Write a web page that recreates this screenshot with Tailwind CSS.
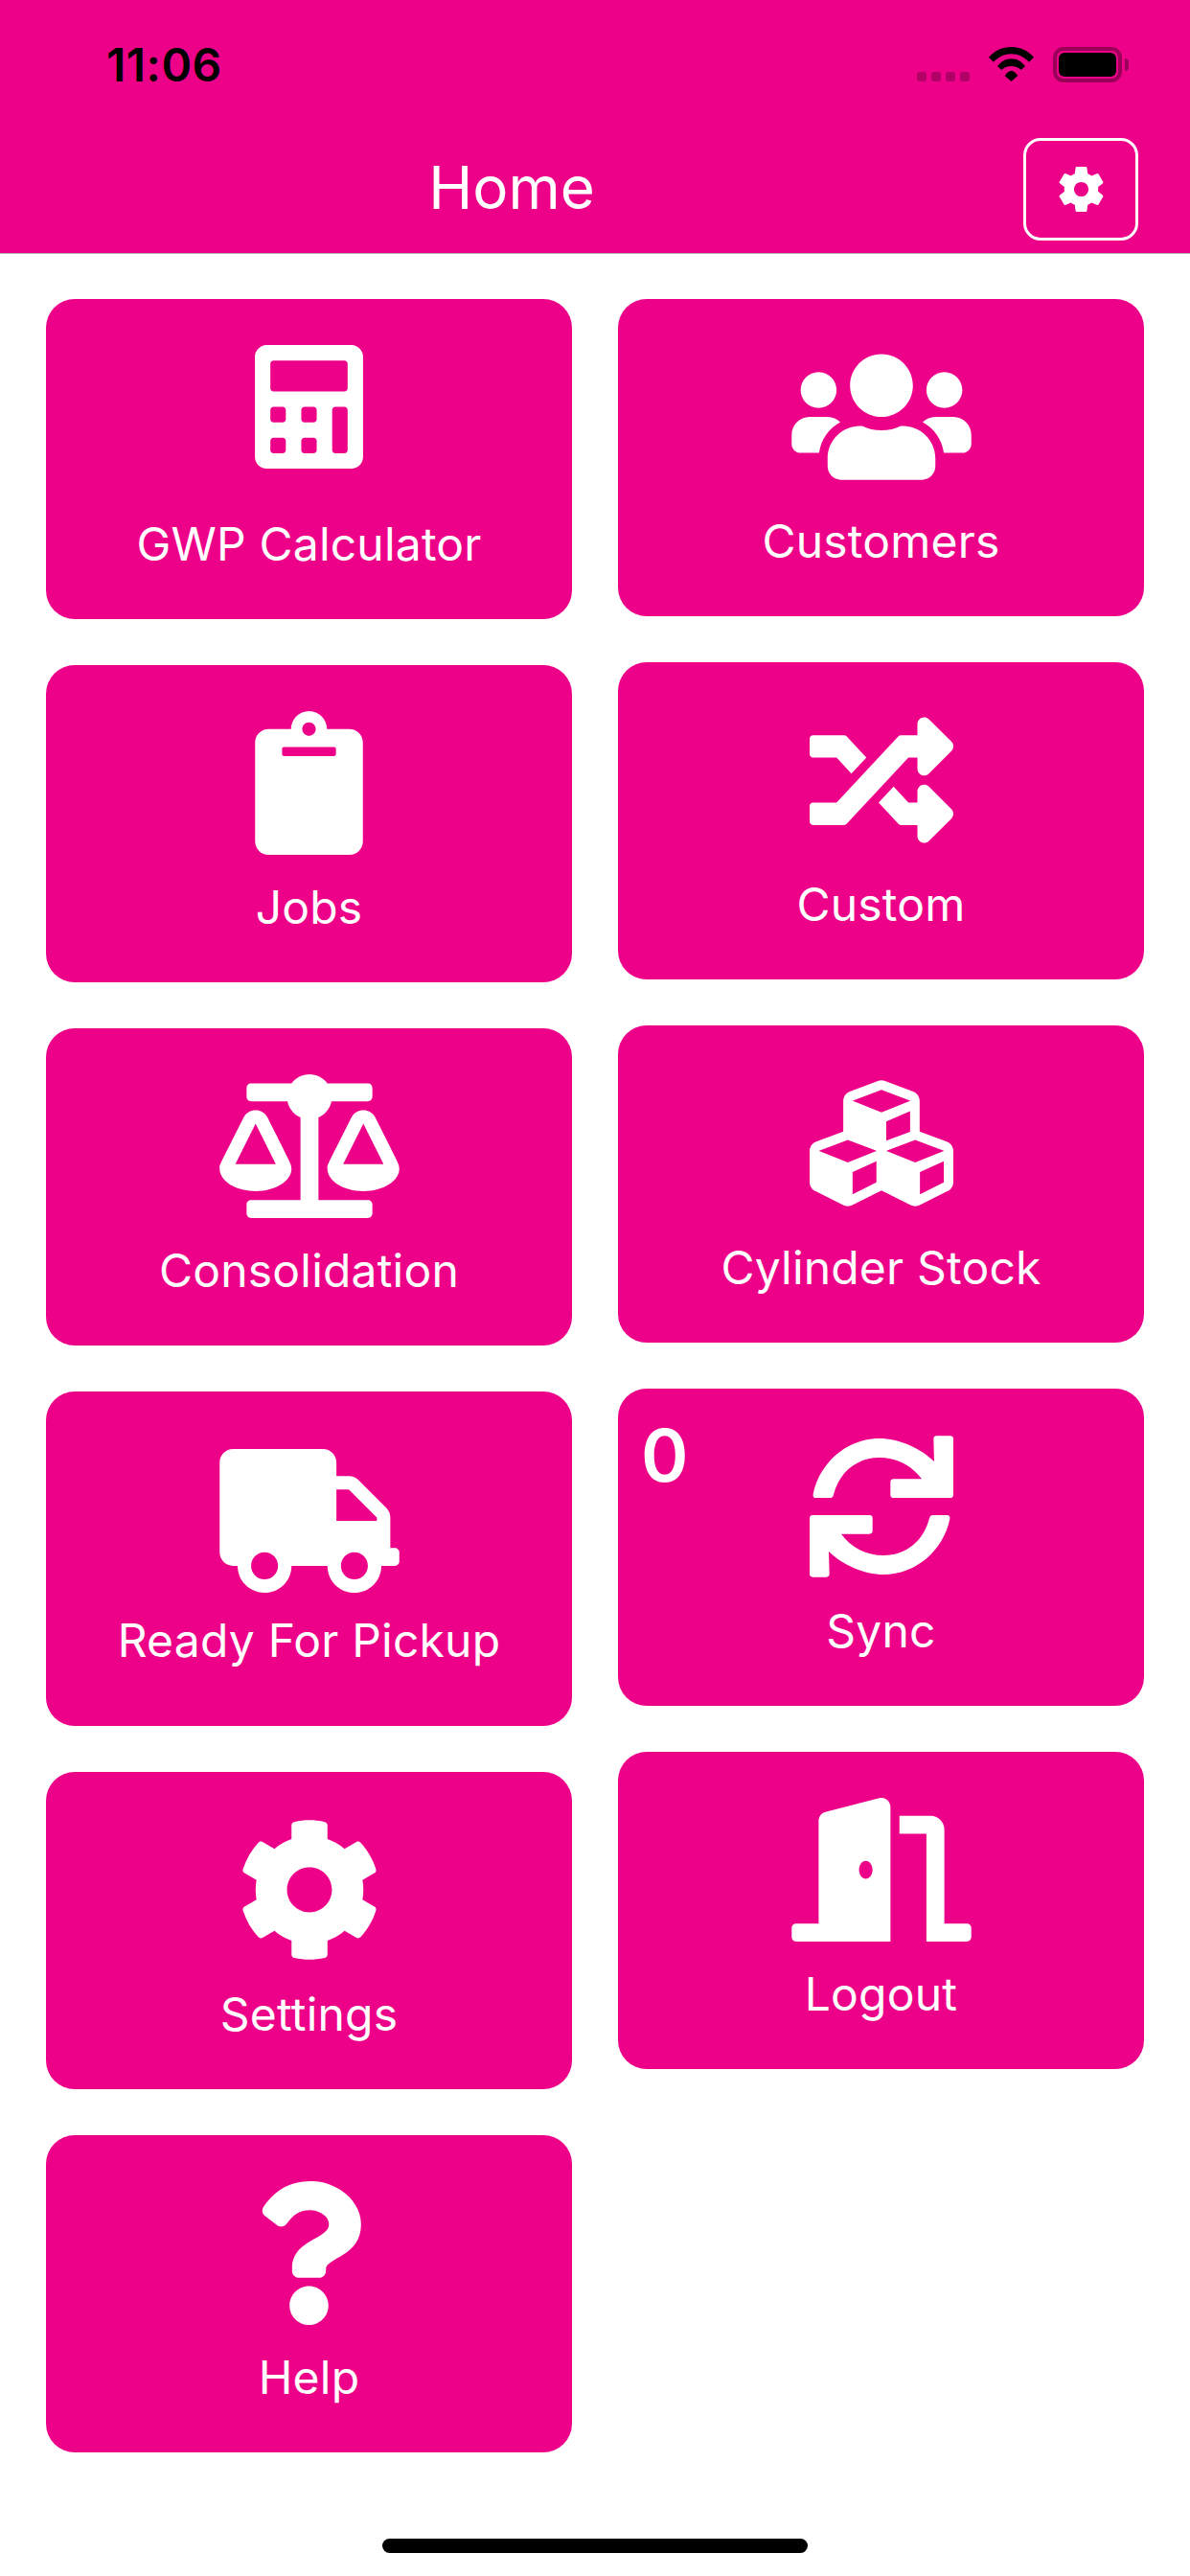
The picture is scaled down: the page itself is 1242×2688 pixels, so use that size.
<!DOCTYPE html>
<html lang="en">
    <head>
        <meta charset="UTF-8" />
        <meta name="viewport" content="width=device-width, initial-scale=1.0" />
        <title>Home</title>
        <script src="https://cdn.jsdelivr.net/npm/@tailwindcss/browser@4"></script>
    </head>
    <body class="bg-white font-['Inter','Liberation_Sans',sans-serif]">
        <div class="relative w-[1242px] h-[2688px] overflow-hidden">
            <!-- Header -->
            <header class="h-[265px] bg-[#ee0189] border-b border-[#b5b5b5]">
                <div class="h-[144px] flex items-start">
                    <div class="ml-[111px] mt-[39px] text-[48px] leading-[58px] font-semibold text-black tracking-[0.5px]">11:06</div>
                    <div class="ml-auto mr-[64px] mt-[49px] flex items-start">
                        <div class="mt-[26px] flex gap-[5px]">
                            <div class="w-[10px] h-[10px] rounded-[3px] bg-black/25"></div>
                            <div class="w-[10px] h-[10px] rounded-[3px] bg-black/25"></div>
                            <div class="w-[10px] h-[10px] rounded-[3px] bg-black/25"></div>
                            <div class="w-[10px] h-[10px] rounded-[3px] bg-black/25"></div>
                        </div>
                        <svg class="ml-[20px] w-[47px] h-[36px]" viewBox="0 0 47 36"><path d="M0 10.700C6 4 14.500 0 23.500 0S41 4 47 10.700l-5 5C37 10.500 31 7.300 23.500 7.300S10 10.500 5 15.700z"/><path d="M9 20C13 15 18 12.300 23.500 12.300S34 15 38 20l-4.300 4C31 21.500 27.500 20 23.500 20s-7.500 1.500-10.200 4z"/><path d="M16.700 30c2-3 4.300-5 6.800-5s4.800 2 6.800 5L23.500 36z"/></svg>
                        <div class="ml-[20px] w-[72px] h-[37px] rounded-[11px] border-[4px] border-black/35 p-[2px]">
                            <div class="w-full h-full rounded-[6px] bg-black"></div>
                        </div>
                        <div class="ml-[3px] mt-[12px] w-[4px] h-[13px] rounded-r-[4px] bg-black/35"></div>
                    </div>
                </div>
                <div class="flex items-start pr-[54px]">
                    <div class="flex-1 text-center text-[62px] leading-[104px] text-white">Home</div>
                    <button class="w-[120px] h-[107px] rounded-[18px] border-[3px] border-white flex items-center justify-center">
                        <svg class="w-[59px] h-[59px] fill-white" viewBox="0 0 24 24"><path fill-rule="evenodd" d="M19.140 12.940c.04-.3.06-.61.06-.94 0-.32-.02-.64-.07-.94l2.030-1.580c.18-.14.23-.41.12-.61l-1.920-3.320c-.12-.22-.37-.29-.59-.22l-2.390.96c-.5-.38-1.030-.7-1.620-.94L14.400 2.810c-.04-.24-.24-.41-.48-.41h-3.840c-.24 0-.43.17-.47.41L9.250 5.350c-.59.24-1.130.57-1.620.94L5.240 5.330c-.22-.08-.47 0-.59.22L2.740 8.870c-.12.21-.08.47.12.61l2.030 1.580c-.05.3-.09.63-.09.94s.02.64.07.94l-2.030 1.580c-.18.14-.23.41-.12.61l1.920 3.320c.12.22.37.29.59.22l2.390-.96c.5.38 1.030.7 1.620.94l.36 2.540c.05.24.24.41.48.41h3.840c.24 0 .44-.17.47-.41l.36-2.540c.59-.24 1.130-.56 1.620-.94l2.390.96c.22.08.47 0 .59-.22l1.920-3.320c.12-.22.07-.47-.12-.61l-2.010-1.580zM12 15.100a3.100 3.100 0 1 1 0-6.200 3.100 3.100 0 0 1 0 6.200z"/></svg>
                    </button>
                </div>
            </header>

            <!-- Menu -->
            <main class="flex gap-[48px] px-[48px] pt-[47px]">
                <div class="w-[549px] flex flex-col gap-[48px]">
                    <div class="rounded-[30px] bg-[#ee0189] flex flex-col items-center pt-[48px] pb-[48px]">
                        <svg class="w-[113px] h-[129px] fill-white" viewBox="0 0 448 512"><path d="M400 0H48C22.400 0 0 22.400 0 48v416c0 25.600 22.400 48 48 48h352c25.600 0 48-22.400 48-48V48c0-25.600-22.400-48-48-48zM128 435.200c0 6.400-6.400 12.800-12.800 12.800H76.800c-6.400 0-12.800-6.400-12.800-12.800v-38.400c0-6.400 6.400-12.800 12.800-12.800h38.400c6.400 0 12.800 6.400 12.800 12.800v38.400zm0-128c0 6.400-6.400 12.800-12.800 12.800H76.800c-6.400 0-12.800-6.400-12.800-12.800v-38.400c0-6.400 6.400-12.800 12.800-12.800h38.400c6.400 0 12.800 6.400 12.800 12.800v38.400zm128 128c0 6.400-6.400 12.800-12.800 12.800h-38.400c-6.400 0-12.800-6.400-12.800-12.800v-38.400c0-6.400 6.400-12.800 12.800-12.800h38.400c6.400 0 12.800 6.400 12.800 12.800v38.400zm0-128c0 6.400-6.400 12.800-12.800 12.800h-38.400c-6.400 0-12.800-6.400-12.800-12.800v-38.400c0-6.400 6.400-12.800 12.800-12.800h38.400c6.400 0 12.800 6.400 12.800 12.800v38.400zm128 128c0 6.400-6.400 12.800-12.800 12.800h-38.400c-6.400 0-12.800-6.400-12.800-12.800V268.800c0-6.400 6.400-12.800 12.800-12.800h38.400c6.400 0 12.800 6.400 12.800 12.800v166.400zm0-256c0 6.400-6.400 12.800-12.800 12.800H76.800c-6.400 0-12.800-6.400-12.800-12.800V76.800C64 70.400 70.400 64 76.800 64h294.400c6.400 0 12.800 6.400 12.800 12.800v102.400z"/></svg>
                        <div class="mt-[48px] text-[48px] leading-[61px] tracking-[0.2px] text-white">GWP Calculator</div>
                    </div>
                    <div class="rounded-[30px] bg-[#ee0189] flex flex-col items-center pt-[48px] pb-[48px]">
                        <svg class="w-[113px] h-[150px] fill-white" viewBox="0 0 384 512"><path d="M384 112v352c0 26.510-21.490 48-48 48H48c-26.510 0-48-21.490-48-48V112c0-26.510 21.490-48 48-48h80c0-35.290 28.710-64 64-64s64 28.710 64 64h80c26.510 0 48 21.490 48 48zM192 40c-13.255 0-24 10.745-24 24s10.745 24 24 24 24-10.745 24-24-10.745-24-24-24m96 114v-20a6 6 0 0 0-6-6H102a6 6 0 0 0-6 6v20a6 6 0 0 0 6 6h180a6 6 0 0 0 6-6z"/></svg>
                        <div class="mt-[24px] text-[48px] leading-[61px] tracking-[0.2px] text-white">Jobs</div>
                    </div>
                    <div class="rounded-[30px] bg-[#ee0189] flex flex-col items-center pt-[48px] pb-[48px]">
                        <svg class="w-[188px] h-[150px] fill-white" viewBox="0 0 640 512"><path d="M256 336h-.02c0-16.180 1.340-8.730-85.050-181.510-17.650-35.290-68.190-35.360-85.870 0C-2.060 328.750.02 320.330.02 336H0c0 44.180 57.310 80 128 80s128-35.820 128-80zM128 176l72 144H56l72-144zm511.980 160c0-16.180 1.340-8.730-85.050-181.510-17.650-35.290-68.190-35.360-85.870 0-87.120 174.260-85.040 165.840-85.040 181.510H384c0 44.180 57.310 80 128 80s128-35.820 128-80h-.02zM440 320l72-144 72 144H440zm88 128H352V153.250c23.510-10.290 41.160-31.480 46.390-57.250H528c8.840 0 16-7.160 16-16V48c0-8.840-7.160-16-16-16H383.640C369.040 12.680 346.090 0 320 0s-49.040 12.680-63.640 32H112c-8.840 0-16 7.160-16 16v32c0 8.840 7.160 16 16 16h129.610c5.230 25.760 22.870 46.960 46.390 57.250V448H112c-8.840 0-16 7.160-16 16v32c0 8.840 7.160 16 16 16h416c8.840 0 16-7.160 16-16v-32c0-8.840-7.160-16-16-16z"/></svg>
                        <div class="mt-[24px] text-[48px] leading-[61px] tracking-[0.2px] text-white">Consolidation</div>
                    </div>
                    <div class="rounded-[30px] bg-[#ee0189] flex flex-col items-center pt-[60px] pb-[59px]">
                        <svg class="w-[188px] h-[150px] fill-white" viewBox="0 0 640 512"><path d="M624 352h-16V243.900c0-12.700-5.100-24.900-14.100-33.900L494 110.100c-9-9-21.200-14.100-33.900-14.100H416V48c0-26.500-21.500-48-48-48H48C21.500 0 0 21.500 0 48v320c0 26.500 21.500 48 48 48h16c0 53 43 96 96 96s96-43 96-96h128c0 53 43 96 96 96s96-43 96-96h48c8.800 0 16-7.200 16-16v-32c0-8.800-7.200-16-16-16zM160 464c-26.500 0-48-21.500-48-48s21.500-48 48-48 48 21.500 48 48-21.500 48-48 48zm320 0c-26.500 0-48-21.500-48-48s21.500-48 48-48 48 21.500 48 48-21.500 48-48 48zm80-208H416V144h44.100l99.900 99.900V256z"/></svg>
                        <div class="mt-[19px] text-[48px] leading-[61px] tracking-[0.2px] text-white">Ready For Pickup</div>
                    </div>
                    <div class="rounded-[30px] bg-[#ee0189] flex flex-col items-center pt-[48px] pb-[48px]">
                        <svg class="w-[150px] h-[150px] fill-white" viewBox="0 0 512 512"><path d="M487.400 315.700l-42.600-24.600c4.300-23.200 4.300-47 0-70.200l42.600-24.600c4.900-2.800 7.100-8.600 5.500-14-11.100-35.600-30-67.800-54.700-94.600-3.800-4.100-10-5.100-14.800-2.300L380.800 110c-17.900-15.400-38.500-27.300-60.800-35.100V25.800c0-5.600-3.900-10.500-9.400-11.700-36.700-8.200-74.300-7.800-109.200 0-5.500 1.200-9.400 6.100-9.400 11.700V75c-22.200 7.900-42.800 19.800-60.800 35.100L88.700 85.500c-4.900-2.800-11-1.900-14.800 2.300-24.700 26.700-43.600 58.900-54.700 94.600-1.700 5.400.6 11.200 5.500 14L67.300 221c-4.300 23.200-4.300 47 0 70.200l-42.600 24.600c-4.900 2.800-7.100 8.600-5.500 14 11.100 35.600 30 67.800 54.700 94.600 3.800 4.100 10 5.100 14.800 2.300l42.600-24.600c17.900 15.400 38.500 27.300 60.800 35.100v49.200c0 5.600 3.900 10.500 9.400 11.700 36.700 8.200 74.300 7.800 109.200 0 5.500-1.200 9.400-6.100 9.400-11.700v-49.200c22.200-7.900 42.800-19.800 60.800-35.100l42.600 24.600c4.900 2.800 11 1.900 14.800-2.300 24.700-26.700 43.600-58.900 54.700-94.600 1.500-5.500-.7-11.300-5.600-14.100zM256 336c-44.100 0-80-35.900-80-80s35.900-80 80-80 80 35.900 80 80-35.900 80-80 80z"/></svg>
                        <div class="mt-[24px] text-[48px] leading-[61px] tracking-[0.2px] text-white">Settings</div>
                    </div>
                    <div class="rounded-[30px] bg-[#ee0189] flex flex-col items-center pt-[48px] pb-[48px]">
                        <svg class="w-[113px] h-[150px] fill-white" viewBox="0 0 384 512"><path d="M202.021 0C122.202 0 70.503 32.703 29.914 91.026c-7.363 10.580-5.093 25.086 5.178 32.874l43.138 32.709c10.373 7.865 25.132 6.026 33.253-4.148 25.049-31.381 43.630-49.449 82.757-49.449 30.764 0 68.816 19.799 68.816 49.631 0 22.552-18.617 34.134-48.993 51.164-35.423 19.860-82.299 44.576-82.299 106.405V320c0 13.255 10.745 24 24 24h72.471c13.255 0 24-10.745 24-24v-5.773c0-42.860 125.268-44.645 125.268-160.627C377.504 66.256 286.902 0 202.021 0zM192 373.459c-38.196 0-69.271 31.075-69.271 69.271 0 38.195 31.075 69.270 69.271 69.270s69.271-31.075 69.271-69.271-31.075-69.270-69.271-69.270z"/></svg>
                        <div class="mt-[24px] text-[48px] leading-[61px] tracking-[0.2px] text-white">Help</div>
                    </div>
                </div>

                <div class="w-[549px] flex flex-col gap-[48px]">
                    <div class="rounded-[30px] bg-[#ee0189] flex flex-col items-center pt-[48px] pb-[48px]">
                        <svg class="w-[188px] h-[150px] fill-white" viewBox="0 0 640 512"><path d="M96 224c35.300 0 64-28.700 64-64s-28.700-64-64-64-64 28.700-64 64 28.700 64 64 64zm448 0c35.300 0 64-28.700 64-64s-28.700-64-64-64-64 28.700-64 64 28.700 64 64 64zm32 32h-64c-17.600 0-33.500 7.100-45.100 18.600 40.300 22.100 68.900 62 75.100 109.400h66c17.700 0 32-14.300 32-32v-32c0-35.300-28.700-64-64-64zm-256 0c61.900 0 112-50.100 112-112S381.900 32 320 32 208 82.100 208 144s50.100 112 112 112zm76.800 32h-8.300c-20.800 10-43.900 16-68.500 16s-47.600-6-68.500-16h-8.300C179.600 288 128 339.600 128 403.200V432c0 26.500 21.500 48 48 48h288c26.500 0 48-21.500 48-48v-28.800c0-63.600-51.600-115.200-115.200-115.200zm-223.700-13.400C161.500 263.100 145.600 256 128 256H64c-35.300 0-64 28.700-64 64v32c0 17.700 14.300 32 32 32h65.900c6.300-47.400 34.900-87.300 75.200-109.400z"/></svg>
                        <div class="mt-[24px] text-[48px] leading-[61px] tracking-[0.2px] text-white">Customers</div>
                    </div>
                    <div class="rounded-[30px] bg-[#ee0189] flex flex-col items-center pt-[48px] pb-[48px]">
                        <svg class="w-[150px] h-[150px] fill-white" viewBox="0 0 512 512"><path d="M504.971 359.029c9.373 9.373 9.373 24.569 0 33.941l-80 79.984c-15.010 15.010-40.971 4.490-40.971-16.971V416h-58.785a12.004 12.004 0 0 1-8.773-3.812l-70.556-75.596 53.333-57.143L352 336h32v-39.981c0-21.438 25.943-31.998 40.971-16.971l80 79.981zM12 176h84l52.781 56.551 53.333-57.143-70.556-75.596A11.999 11.999 0 0 0 122.785 96H12c-6.627 0-12 5.373-12 12v56c0 6.627 5.373 12 12 12zm372 0v39.984c0 21.460 25.961 31.980 40.971 16.971l80-79.984c9.373-9.373 9.373-24.569 0-33.941l-80-79.981C409.943 24.021 384 34.582 384 56.019V96h-58.785a12.004 12.004 0 0 0-8.773 3.812L96 336H12c-6.627 0-12 5.373-12 12v56c0 6.627 5.373 12 12 12h110.785c3.326 0 6.503-1.381 8.773-3.812L352 176h32z"/></svg>
                        <div class="mt-[24px] text-[48px] leading-[61px] tracking-[0.2px] text-white">Custom</div>
                    </div>
                    <div class="rounded-[30px] bg-[#ee0189] flex flex-col items-center pt-[48px] pb-[48px]">
                        <svg class="w-[150px] h-[150px] fill-white" viewBox="0 0 512 512"><path d="M488.600 250.200L392 214V105.500c0-15-9.300-28.400-23.400-33.700l-100-37.500c-8.100-3.100-17.100-3.100-25.300 0l-100 37.500c-14.100 5.300-23.400 18.700-23.400 33.700V214l-96.600 36.200C9.300 255.500 0 268.900 0 283.900V394c0 13.600 7.700 26.100 19.900 32.200l100 50c10.100 5.100 22.100 5.100 32.200 0l103.900-52 103.900 52c10.100 5.100 22.100 5.100 32.200 0l100-50c12.200-6.100 19.900-18.600 19.900-32.200V283.900c0-15-9.300-28.400-23.400-33.700zM358 214.800l-85 31.900v-68.200l85-37v73.300zM154 104.100l102-38.200 102 38.200v.6l-102 41.400-102-41.400v-.6zm84 291.100l-85 42.500v-79.100l85-38.800v75.400zm0-112l-102 41.400-102-41.400v-.6l102-38.200 102 38.200v.6zm240 112l-85 42.500v-79.100l85-38.800v75.400zm0-112l-102 41.400-102-41.400v-.6l102-38.200 102 38.200v.6z"/></svg>
                        <div class="mt-[24px] text-[48px] leading-[61px] tracking-[0.2px] text-white">Cylinder Stock</div>
                    </div>
                    <div class="relative rounded-[30px] bg-[#ee0189] flex flex-col items-center pt-[48px] pb-[48px]">
                        <div class="absolute left-[24px] top-[30px] text-[75px] leading-[80px] font-semibold text-white">0</div>
                        <svg class="w-[150px] h-[150px] fill-white" viewBox="72 78 450 450"><path d="M83 264C103 165 190 90 290 90c62 0 128 30 172 72l-2-70q0-10 10-10h42q10 0 10 10v174q0 10-10 10H335q-10 0-10-10v-39q0-10 10-10h88c-31-42-78-67-133-67-70 0-125 45-143 116q-2 10-12 10H92q-11 0-9-12z"/><path transform="rotate(180 297 303)" d="M83 264C103 165 190 90 290 90c62 0 128 30 172 72l-2-70q0-10 10-10h42q10 0 10 10v174q0 10-10 10H335q-10 0-10-10v-39q0-10 10-10h88c-31-42-78-67-133-67-70 0-125 45-143 116q-2 10-12 10H92q-11 0-9-12z"/></svg>
                        <div class="mt-[24px] text-[48px] leading-[61px] tracking-[0.2px] text-white">Sync</div>
                    </div>
                    <div class="rounded-[30px] bg-[#ee0189] flex flex-col items-center pt-[48px] pb-[48px]">
                        <svg class="w-[188px] h-[150px] fill-white" viewBox="0 0 640 512"><path d="M624 448h-80V113.450C544 86.190 522.470 64 496 64H384v64h96v384h144c8.840 0 16-7.160 16-16v-32c0-8.840-7.160-16-16-16zM312.240 1.010l-192 49.740C105.990 54.440 96 67.700 96 82.920V448H16c-8.840 0-16 7.160-16 16v32c0 8.840 7.160 16 16 16h336V33.180c0-21.580-19.560-37.410-39.760-32.170zM264 288c-13.250 0-24-14.330-24-32 0-17.670 10.750-32 24-32 13.250 0 24 14.330 24 32 0 17.670-10.750 32-24 32z"/></svg>
                        <div class="mt-[24px] text-[48px] leading-[61px] tracking-[0.2px] text-white">Logout</div>
                    </div>
                </div>
            </main>

            <!-- Home indicator -->
            <div class="absolute left-[399px] top-[2649px] w-[444px] h-[15px] rounded-full bg-black"></div>
        </div>
    </body>
</html>
